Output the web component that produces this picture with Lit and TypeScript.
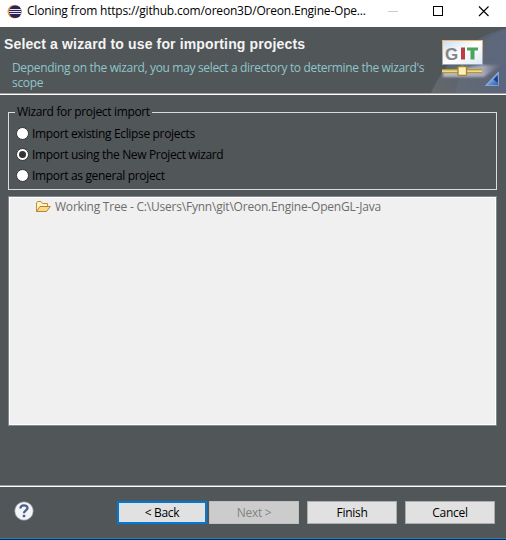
import { LitElement, html, css } from "lit";
import { customElement, state } from "lit/decorators.js";
import { classMap } from "lit/directives/class-map.js";

const eclipseIcon = html`<svg class="eclipse" width="16" height="16" viewBox="0 0 16 16">
  <circle cx="7.4" cy="7.6" r="6.9" fill="#f7941e" />
  <circle cx="8.2" cy="7.6" r="6.6" fill="#fff" />
  <circle cx="8.2" cy="7.6" r="6.4" fill="#2c2255" />
  <path d="M2.5 5.5h11.4M2 7.5h12.4M2.5 9.5h11.4" stroke="#e6e4f0" stroke-width="1" />
</svg>`;

const gitBanner = html`<svg class="banner" width="75" height="66" viewBox="0 0 75 66">
  <defs>
    <linearGradient id="glow" x1="0" y1="0.6" x2="1" y2="0.5">
      <stop offset="0" stop-color="#6d7276" />
      <stop offset="0.6" stop-color="#606876" />
      <stop offset="1" stop-color="#5a6784" />
    </linearGradient>
    <linearGradient id="card" x1="0" y1="0" x2="1" y2="1">
      <stop offset="0" stop-color="#cbdcee" />
      <stop offset="0.5" stop-color="#ffffff" />
      <stop offset="1" stop-color="#dde7f3" />
    </linearGradient>
    <linearGradient id="frame" x1="0" y1="0" x2="0" y2="1">
      <stop offset="0" stop-color="#e9b375" />
      <stop offset="1" stop-color="#8fa9c4" />
    </linearGradient>
    <linearGradient id="shade" x1="0" y1="0" x2="1" y2="0">
      <stop offset="0" stop-color="#b9b7c6" />
      <stop offset="0.7" stop-color="#a9a8ba" />
      <stop offset="1" stop-color="#687089" stop-opacity="0.3" />
    </linearGradient>
    <linearGradient id="corner" x1="0.3" y1="0.3" x2="1" y2="1">
      <stop offset="0" stop-color="#d4e4fa" />
      <stop offset="0.45" stop-color="#5f8fd2" />
      <stop offset="1" stop-color="#2b5cae" />
    </linearGradient>
    <filter id="soft"><feGaussianBlur stdDeviation="1" /></filter>
  </defs>
  <path d="M0 66C13 36 39 10 75 1V66Z" fill="url(#glow)" opacity="0.65" />
  <path d="M24 66C31 32 50 11 75 2V66Z" fill="#7180a0" opacity="0.22" />
  <path d="M52 66C57 50 64 43 75 37V66Z" fill="#55648a" opacity="0.22" />
  <path d="M50 38L70 38L53 50H12V45Z" fill="url(#shade)" filter="url(#soft)" />
  <rect x="11.5" y="13.5" width="40" height="24" fill="url(#card)" stroke="url(#frame)" />
  <text class="g" x="14" y="33">G</text>
  <path d="M30 20.500h4v12h-4z" fill="#bc3e43" />
  <path d="M36 20.500h11v3h-3.500v9h-4v-9h-3.500z" fill="#4ba35d" />
  <path d="M31.5 38v3" stroke="#7da05a" stroke-width="2" />
  <path d="M11 42h40v4H11z" fill="#b39a2e" />
  <path d="M11 43.400h40v1.300H11z" fill="#fff0a0" />
  <rect x="27" y="39.7" width="8.500" height="8.600" rx="0.500" fill="#fff0bd" stroke="#a5832b" stroke-width="1.3" />
  <path d="M67.500 45V58.500H54.500Z" fill="url(#corner)" stroke="#9db4d8" stroke-width="0.700" />
  <path d="M66.700 48V55.500L62.500 52.500Z" fill="#153c86" />
</svg>`;

const folderIcon = html`<svg class="folder" width="16" height="16" viewBox="0 0 16 16">
  <path d="M1.500 12.500V4L2.500 2.500H6L7.500 4.500H12.500V7" fill="#fdf3c8" stroke="#c58a34" />
  <path d="M1.500 12.500L5 7.500H15.300L11.500 12.500Z" fill="#fad98a" stroke="#bd8132" stroke-linejoin="round" />
</svg>`;

const helpIcon = html`<svg class="help" width="20" height="20" viewBox="0 0 20 20">
  <circle cx="10" cy="10" r="9.300" fill="#f3f4f7" stroke="#7e8ba6" stroke-width="0.700" />
  <path d="M6.400 7.500C6.400 3.300 13.500 3.400 13.500 7C13.500 9.400 10 9.300 10 12.300" fill="none" stroke="#4c6088" stroke-width="2.300" />
  <rect x="8.700" y="13.800" width="2.600" height="2.400" rx="0.600" fill="#4c6088" />
</svg>`;

@customElement("app-root")
export class AppRoot extends LitElement {
  @state() private selected = 1;

  private options = [
    "Import existing Eclipse projects",
    "Import using the New Project wizard",
    "Import as general project",
  ];

  static styles = css`
    :host {
      display: flex;
      flex-direction: column;
      box-sizing: border-box;
      width: 506px;
      height: 540px;
      overflow: hidden;
      background: #515658;
      color: #000;
      font: 12px/16px "Open Sans", "Noto Sans", sans-serif;
      white-space: nowrap;
      border-bottom: 1px solid #15283a;
    }
    * { box-sizing: border-box; }
    svg { display: block; flex: none; }
    .titlebar { display: flex; height: 27px; flex: none; background: #fff; padding-left: 7px; }
    .eclipse { margin-top: 4px; }
    .title { margin: 3px 0 0 4px; width: 361px; letter-spacing: -0.2px; }
    .head { display: flex; height: 66px; flex: none; }
    .words { width: 431px; flex: none; padding: 8px 0 0 4px; }
    h1 { margin: 0; font: bold 14px/18px "Liberation Sans", Arial, sans-serif; color: #f4f4f4; letter-spacing: 0.14px; }
    .desc { margin: 7px 0 0 8px; line-height: 15px; color: #8fc5cb; letter-spacing: -0.34px; }
    .g { font: bold 17px "Liberation Sans", Arial, sans-serif; fill: #858585; }
    .rule { height: 2px; flex: none; border-top: 1px solid #a0a0a0; background: #fff; }
    .group { margin: 17px 9px 0 8px; height: 78px; flex: none; border: 1px solid #dcdcdc; padding-left: 7px; letter-spacing: -0.34px; }
    .legend { display: block; width: 137px; height: 16px; margin: -9px 0 0 -1px; padding-left: 2px; background: #515658; }
    .option { display: flex; align-items: center; height: 21px; }
    .option:nth-of-type(1) { margin-top: 3px; }
    .radio { width: 13px; height: 13px; border-radius: 50%; background: #fff; border: 1px solid #333; margin-right: 3px; display: grid; place-items: center; }
    .radio.on::after { content: ""; width: 7px; height: 7px; border-radius: 50%; background: #333; }
    .tree { margin: 6px 9px 0 8px; height: 230px; flex: none; background: #f0f0f0; border: 1px solid #828790; box-shadow: inset 0 0 0 1px #fff; padding: 2px 0 0 26px; }
    .node { display: flex; color: #6d6d6d; letter-spacing: -0.21px; }
    .folder { margin-right: 4px; }
    .foot { display: flex; flex: 1; border-bottom: 1px solid #1883d7; padding: 14px 0 0 14px; }
    .bottomrule { margin-top: 59px; }
    .help { margin-right: 83px; }
    button { width: 90px; height: 23px; padding: 0; font: inherit; letter-spacing: -0.3px; color: #000; background: #e1e1e1; border: 1px solid #adadad; }
    button.default { border: 2px solid #0078d7; }
    button:disabled { background: #ccc; border-color: #bfbfbf; color: #838383; }
    .next { margin-left: 2px; }
    .finish, .cancel { margin-left: 8px; }
  `;

  render() {
    return html`
      <div class="titlebar">
        ${eclipseIcon}
        <span class="title">Cloning from https://github.com/oreon3D/Oreon.Engine-Ope...</span>
        <svg width="118" height="27" viewBox="0 0 118 27">
          <path d="M0 11.500h10" stroke="#ccc" />
          <rect x="45.500" y="6.500" width="9" height="9" fill="none" stroke="#000" />
          <path d="M91 6.500l9.500 9.500M100.500 6.500l-9.500 9.500" stroke="#000" stroke-width="1.100" />
        </svg>
      </div>
      <div class="head">
        <div class="words">
          <h1>Select a wizard to use for importing projects</h1>
          <div class="desc">Depending on the wizard, you may select a directory to determine the wizard's<br />scope</div>
        </div>
        ${gitBanner}
      </div>
      <div class="rule"></div>
      <div class="group">
        <span class="legend">Wizard for project import</span>
        ${this.options.map(
          (label, i) => html`<div class="option" @click=${() => (this.selected = i)}>
            <span class=${classMap({ radio: true, on: i === this.selected })}></span><span>${label}</span>
          </div>`
        )}
      </div>
      <div class="tree">
        <div class="node">${folderIcon}<span>Working Tree - C:\\Users\\Fynn\\git\\Oreon.Engine-OpenGL-Java</span></div>
      </div>
      <div class="rule bottomrule"></div>
      <div class="foot">
        ${helpIcon}
        <button class="default">&lt; Back</button>
        <button class="next" disabled>Next &gt;</button>
        <button class="finish">Finish</button>
        <button class="cancel">Cancel</button>
      </div>
    `;
  }
}
